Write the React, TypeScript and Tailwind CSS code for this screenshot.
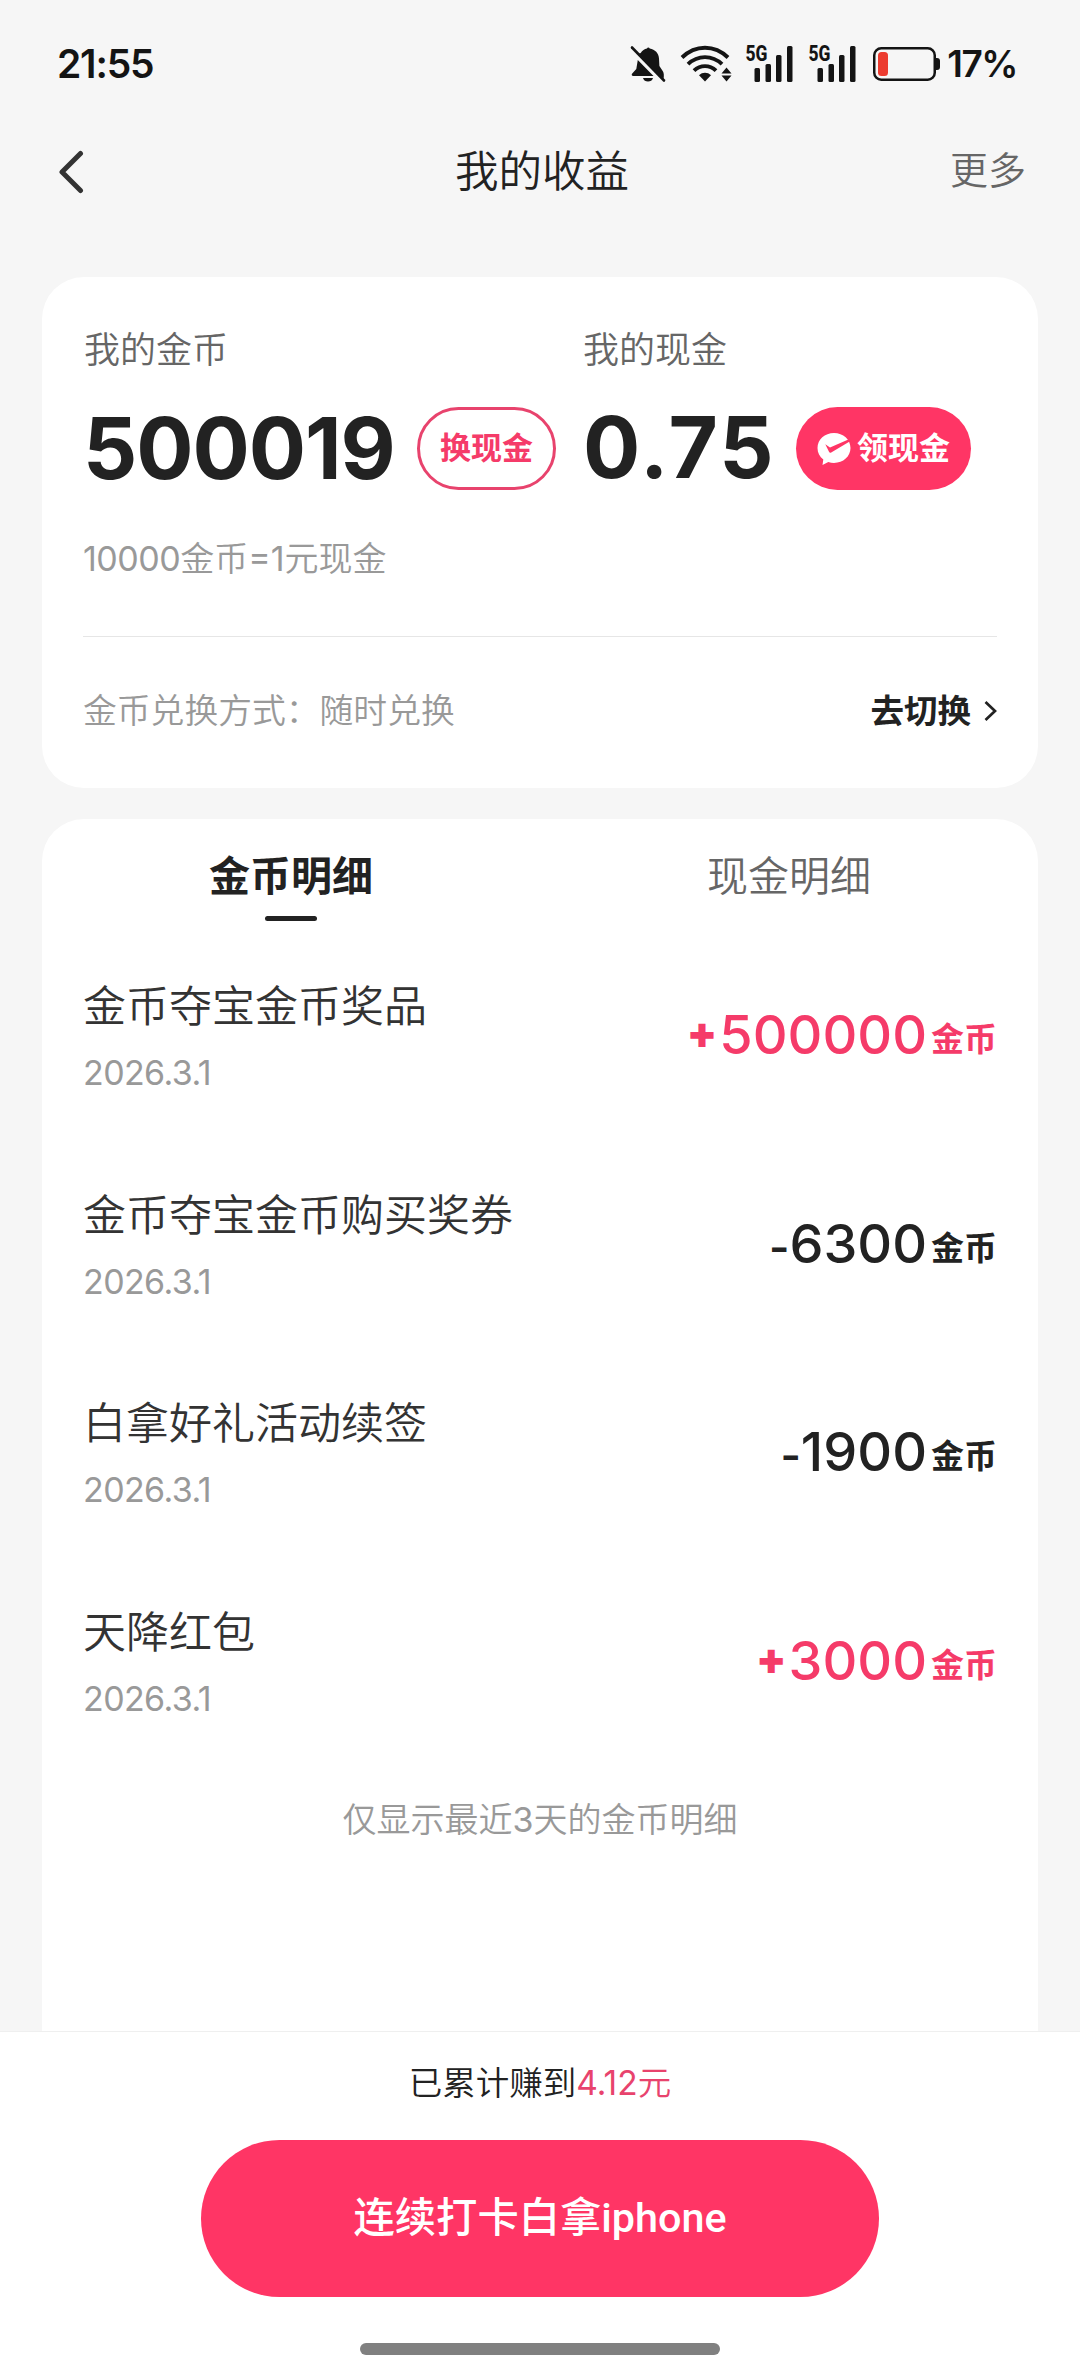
function BellOffIcon() {
  return (
    <svg width="36" height="38" viewBox="0 0 36 38" fill="#141414">
      <path d="M10.700 8C12.300 5.600 14.500 4.100 17 3.600c.3-1.400 2.300-1.400 2.700 0 5.300.9 9 4.600 9.300 9.900l.4 7.500 3.600 5.600c.8 1.400 1.200 4 .5 7.500L8.500 9z" />
      <path d="M7.800 15 23.500 31H3.200c-1.300 0-1.900-1.200-1.200-2.300L6.300 24z" />
      <path d="M13 33h10c-.6 2.400-2.600 3.600-5 3.600s-4.400-1.200-5-3.600z" />
      <path d="M2 2.500 34 35.500" stroke="#141414" strokeWidth="2.600" strokeLinecap="round" />
    </svg>
  )
}

function WifiIcon() {
  return (
    <svg width="52" height="38" viewBox="0 0 52 38" fill="none" stroke="#141414" strokeWidth="3.900">
      <path d="M2 12.500C15.500-.5 34.500-.5 48 12.500" />
      <path d="M8 19.200c9.800-9.400 24.200-9.400 34 0" />
      <path d="M14 25.600c6.400-6 15.600-6 22 0" />
      <path d="M25 36.500 19 30.200c3.300-3.300 8.700-3.300 12 0z" fill="#141414" stroke="none" />
      <path d="M46.500 22.500 51.500 28.500h-10zM46.500 36.500 41.500 30.600h10z" fill="#141414" stroke="none" />
    </svg>
  )
}

function SignalIcon() {
  return (
    <svg width="48" height="56" viewBox="0 -8 48 56" fill="#141414">
      <text x="0.500" y="16.800" fontFamily="Roboto, sans-serif" fontWeight="800" fontSize="21.500" textLength="22" lengthAdjust="spacingAndGlyphs">5G</text>
      <rect x="9.500" y="24" width="5.500" height="14" rx="1.500" />
      <rect x="20.500" y="20" width="5.500" height="18" rx="1.500" />
      <rect x="31" y="11" width="5.500" height="27" rx="1.500" />
      <rect x="42" y="2" width="5.500" height="36" rx="1.500" />
    </svg>
  )
}

function BatteryIcon() {
  return (
    <svg width="68" height="34" viewBox="0 0 68 34" fill="none">
      <rect x="1.250" y="1.250" width="60.500" height="31.500" rx="7" stroke="#141414" strokeWidth="2.500" />
      <rect x="5" y="5" width="10" height="24" rx="3.500" fill="#ec3b2f" />
      <path d="M62.500 11h1.500c2 0 3 1.200 3 3v6c0 1.800-1 3-3 3h-1.500z" fill="#141414" />
    </svg>
  )
}

function BackIcon() {
  return (
    <svg width="26" height="44" viewBox="0 0 26 44" fill="none" stroke="#333" strokeWidth="5" strokeLinecap="round" strokeLinejoin="round">
      <path d="M22.500 3.500 4 22l18.500 18.500" />
    </svg>
  )
}

function ArrowIcon() {
  return (
    <svg width="13" height="20" viewBox="0 0 13 20" fill="none" stroke="#222" strokeWidth="2.700">
      <path d="m1.500 1 9.500 9-9.500 9" />
    </svg>
  )
}

function WechatPayIcon() {
  return (
    <svg width="34" height="34" viewBox="0 0 34 34" fill="none">
      <path d="M17 1C7.800 1 .5 7.600.5 16c0 4.700 2.200 8.700 5.800 11.500L5.500 33l5.800-3c1.800.600 3.700.900 5.700.900C26.200 30.900 33.500 24.400 33.500 16S26.200 1 17 1z" fill="#fff" />
      <path d="M8.300 12.300 13 15.600 32.500 7 33.500 9 14.200 20.500c-1 .6-1.700.3-2.200-.8z" fill="#ff3565" />
    </svg>
  )
}

interface RecordItem {
  title: string
  date: string
  sign: '+' | '-'
  amount: string
}

const records: RecordItem[] = [
  { title: '金币夺宝金币奖品', date: '2026.3.1', sign: '+', amount: '500000' },
  { title: '金币夺宝金币购买奖券', date: '2026.3.1', sign: '-', amount: '6300' },
  { title: '白拿好礼活动续签', date: '2026.3.1', sign: '-', amount: '1900' },
  { title: '天降红包', date: '2026.3.1', sign: '+', amount: '3000' },
]

function StatusBar() {
  return (
    <div className="flex h-32 items-center justify-between pr-[63px] pl-[57px] text-[#141414]">
      <span className="text-[39px] font-semibold tracking-[-1.2px]">21:55</span>
      <div className="flex items-center">
        <BellOffIcon />
        <div className="ml-3.5"><WifiIcon /></div>
        <div className="ml-[13px]"><SignalIcon /></div>
        <div className="ml-[15px]"><SignalIcon /></div>
        <div className="ml-[17px]"><BatteryIcon /></div>
        <span className="ml-1.5 text-[37px] font-semibold tracking-[-1.5px]">17%</span>
      </div>
    </div>
  )
}

function Header() {
  return (
    <div className="grid h-[88px] grid-cols-3 items-center pr-[54px] pl-[58px]">
      <BackIcon />
      <h1 className="text-center text-[43.500px] leading-none font-[350] text-[#222]">我的收益</h1>
      <span className="pb-1 text-right text-[38px] leading-none font-[350] text-[#666]">更多</span>
    </div>
  )
}

function BalanceCard() {
  return (
    <section className="mt-[61px] h-[511px] rounded-[42px] bg-white pr-[41px] pl-[41px]">
      <div className="flex pt-[47px]">
        <div className="w-[500px]">
          <div className="pl-px text-[36px] leading-[52px] font-[350] text-[#666]">我的金币</div>
          <div className="mt-[31px] flex h-[83px] items-center">
            <span className="w-[334px] text-[85px] leading-none font-bold tracking-[-1.1px] text-[#222]">500019</span>
            <button className="h-[83px] w-[139px] rounded-full border-[3px] border-[#e8436d] text-[31px] font-bold text-[#f53b69]">换现金</button>
          </div>
        </div>
        <div>
          <div className="text-[36px] leading-[52px] font-[350] text-[#666]">我的现金</div>
          <div className="mt-[31px] flex h-[83px] items-center">
            <span className="w-[213px] pb-0.5 text-[85px] leading-none font-bold tracking-[2.2px] text-[#222]">0.75</span>
            <button className="flex h-[83px] w-[175px] items-center justify-center gap-1.5 rounded-full bg-[#ff3565] text-[31px] font-bold text-white">
              <WechatPayIcon />
              领现金
            </button>
          </div>
        </div>
      </div>
      <div className="mt-11 text-[34px] leading-[50px] font-[350] text-[#999]">
        <span className="font-normal tracking-[-0.5px]">10000</span>金币<span className="font-normal">=1</span>元现金
      </div>
      <div className="mt-[52px] h-px bg-[#e6e6e6]" />
      <div className="mt-[49px] flex items-center justify-between leading-[50px]">
        <span className="text-[33.800px] font-[350] text-[#999]">金币兑换方式：随时兑换</span>
        <span className="flex items-center gap-[13px] text-[33.500px] font-bold text-[#222]">
          去切换
          <ArrowIcon />
        </span>
      </div>
    </section>
  )
}

function Tabs() {
  return (
    <div className="grid h-[124px] grid-cols-2 pt-[27px] text-center text-[41px]">
      <div className="flex flex-col items-center font-bold text-[#222]">
        <span className="leading-[60px]">金币明细</span>
        <span className="mt-2.5 h-[5px] w-[52px] rounded-full bg-[#222]" />
      </div>
      <div className="leading-[60px] font-[350] text-[#666]">现金明细</div>
    </div>
  )
}

function RecordRow({ record }: { record: RecordItem }) {
  const income = record.sign === '+'
  return (
    <li className="flex h-[208.500px] justify-between pt-8">
      <div>
        <div className="text-[43px] leading-[62px] font-[350] text-[#333]">{record.title}</div>
        <div className="mt-[11px] text-[34px] leading-[50px] tracking-[-0.6px] text-[#999]">{record.date}</div>
      </div>
      <div className={`pt-[27px] text-[54px] leading-[66px] font-medium ${income ? 'text-[#f53b69]' : 'text-[#222]'}`}>
        <span className={income ? 'mr-0.5 align-[6px] text-[44px] leading-none font-black' : 'text-[44px] font-semibold'}>{record.sign}</span>
        {record.amount}
        <span className="ml-1 align-[3px] text-[33px] leading-none font-bold">金币</span>
      </div>
    </li>
  )
}

function BottomBar() {
  return (
    <footer className="flex h-[345px] flex-col items-center border-t border-[#efefef] bg-white">
      <div className="mt-[26px] text-[33.500px] leading-[50px] font-[350] text-[#222]">
        已累计赚到
        <span className="text-[#e8436d]"><span className="font-normal">4.12</span>元</span>
      </div>
      <button className="mt-8 h-[157px] w-[678px] rounded-full bg-[#ff3565] text-[41.300px] font-medium text-white">
        连续打卡白拿<span className="font-[Roboto,sans-serif]">iphone</span>
      </button>
      <div className="mt-[46px] h-3 w-[360px] rounded-full bg-[#808080]" />
    </footer>
  )
}

export default function App() {
  return (
    <div className="flex h-[2376px] w-[1080px] flex-col overflow-hidden bg-[#f6f6f6] font-['Inter','Noto_Sans_CJK_SC',sans-serif]">
      <StatusBar />
      <Header />
      <main className="flex flex-1 flex-col px-[42px]">
        <BalanceCard />
        <section className="mt-[31px] flex-1 rounded-t-[42px] bg-white">
          <Tabs />
          <ul className="px-[41px]">
            {records.map((record) => (
              <RecordRow key={record.title} record={record} />
            ))}
          </ul>
          <p className="mt-[18px] text-center text-[34px] leading-[50px] font-[350] text-[#999]">
            仅显示最近<span className="font-normal">3</span>天的金币明细
          </p>
        </section>
      </main>
      <BottomBar />
    </div>
  )
}
